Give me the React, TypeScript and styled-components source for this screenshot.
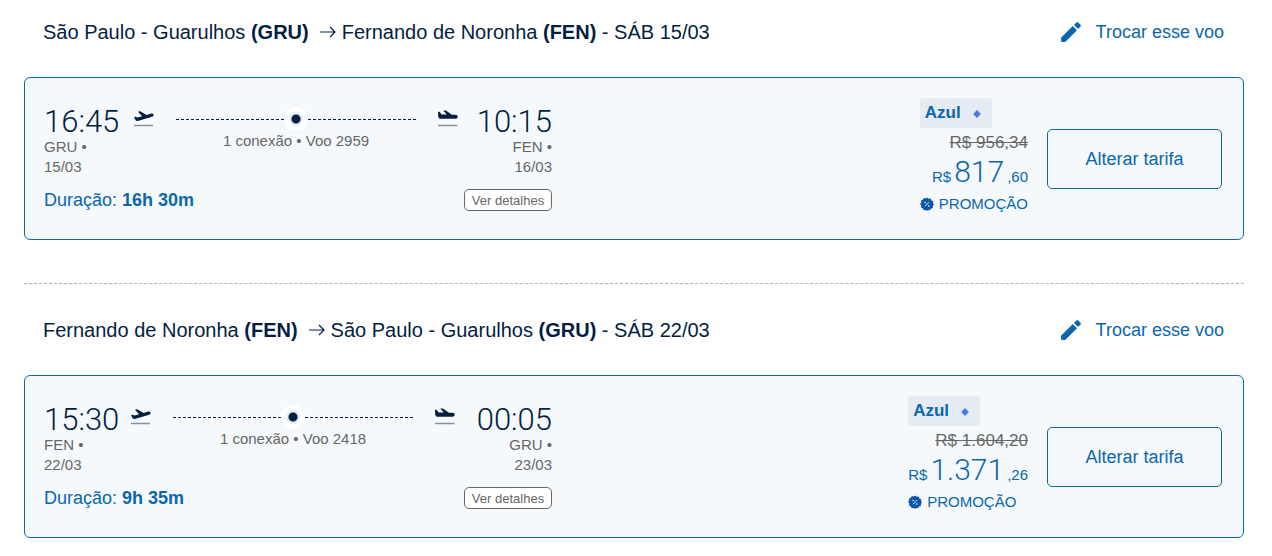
import React from "react";
import styled, { createGlobalStyle } from "styled-components";

const navy = "#041e42";
const blue = "#0a67ad";
const edge = "#12699c";
const grey = "#666666";

const GlobalStyle = createGlobalStyle`
  * { box-sizing: border-box; }
  body { margin: 0; background: #ffffff; color: ${navy}; font-family: "Liberation Sans", Arial, sans-serif; }
  p, h2 { margin: 0; font-weight: 400; }
  button { font-family: inherit; cursor: pointer; }
`;

const Page = styled.main`
  padding: 0 28px 16px 24px;
`;

const Section = styled.section`
  padding: 20px 0 43px;

  & + & {
    border-top: 1px dashed #b4b4b4;
    padding: 34px 0 0;
  }
`;

const Header = styled.header`
  display: flex;
  justify-content: space-between;
  align-items: center;
  padding: 0 20px 0 19px;
  margin-bottom: 33px;
`;

const Route = styled.h2`
  display: flex;
  align-items: center;
  font-size: 20px;
  line-height: 24px;
  white-space: pre;

  svg { margin: 0 6px 0 10px; }
`;

const ChangeLink = styled.a`
  display: flex;
  align-items: center;
  gap: 14px;
  color: ${blue};
  font-size: 18px;
  line-height: 24px;
  text-decoration: none;
`;

const Card = styled.article`
  display: flex;
  justify-content: space-between;
  align-items: flex-start;
  min-height: 163px;
  padding: 20px 21px 16px 19px;
  background: #f5f9fc;
  border: 1px solid ${edge};
  border-radius: 6px;
`;

const Itinerary = styled.div`
  width: 508px;
  padding-top: 9px;
`;

const Leg = styled.div`
  display: flex;
  align-items: flex-start;
`;

const Stop = styled.div<{ $end?: boolean }>`
  width: 76px;
  text-align: ${(p) => (p.$end ? "right" : "left")};
  color: ${grey};
  font-size: 15px;
  line-height: 20px;
`;

const Time = styled.p`
  font-family: Roboto, "Liberation Sans", sans-serif;
  font-weight: 300;
  font-size: 31px;
  line-height: 30px;
  color: ${navy};
`;

const Path = styled.div<{ $gap: number }>`
  flex: 1;
  display: flex;
  justify-content: space-between;
  align-items: flex-start;
  padding: 0 ${(p) => p.$gap}px 0 ${(p) => 32 - p.$gap}px;
`;

const Connection = styled.div`
  width: 240px;
  color: ${grey};
  font-size: 15px;
  line-height: 20px;
  text-align: center;
`;

const Track = styled.div`
  display: flex;
  align-items: center;
  height: 24px;

  &::before,
  &::after {
    content: "";
    flex: 1;
    border-top: 1px dashed ${navy};
  }
`;

const Dot = styled.span`
  width: 24px;
  height: 24px;
  border-radius: 50%;
  background: radial-gradient(circle, ${navy} 4px, #dde3ee 5px, #ffffff 8px);
`;

const LegFooter = styled.div`
  display: flex;
  justify-content: space-between;
  align-items: center;
  margin-top: 12px;
`;

const Duration = styled.p`
  color: ${blue};
  font-size: 18px;
  line-height: 22px;
`;

const DetailsButton = styled.button`
  width: 88px;
  height: 22px;
  padding: 0;
  border: 1px solid ${grey};
  border-radius: 5px;
  background: #ffffff;
  color: ${grey};
  font-size: 13px;
`;

const Purchase = styled.div`
  display: flex;
  align-items: flex-start;
  gap: 19px;
`;

const Fare = styled.div`
  display: flex;
  flex-direction: column;
  align-items: flex-end;
  color: ${blue};
`;

const Badge = styled.span`
  align-self: flex-start;
  display: flex;
  align-items: center;
  gap: 9px;
  width: 72px;
  height: 30px;
  padding-left: 5px;
  border-radius: 3px;
  background: #e4ebf2;
  font-size: 17px;
  font-weight: 700;
`;

const OldPrice = styled.s`
  color: ${grey};
  font-size: 17px;
  line-height: 30px;
`;

const Price = styled.p`
  display: flex;
  align-items: baseline;
  gap: 3px;
  font-size: 15px;
  line-height: 28px;
`;

const Amount = styled.span`
  font-family: Roboto, "Liberation Sans", sans-serif;
  font-weight: 300;
  font-size: 30px;
`;

const Promo = styled.p`
  align-self: flex-start;
  display: flex;
  align-items: center;
  gap: 5px;
  font-size: 15px;
  line-height: 26px;
`;

const FareButton = styled.button`
  width: 175px;
  height: 60px;
  margin-top: 31px;
  border: 1px solid ${edge};
  border-radius: 5px;
  background: transparent;
  color: ${blue};
  font-size: 18px;
`;

const Arrow = () => (
  <svg width="17" height="14" viewBox="0 0 17 14" fill="none" stroke={navy} strokeWidth="1.2" aria-hidden="true">
    <path d="M1 7h15M11 2l5 5-5 5" />
  </svg>
);

const Pencil = () => (
  <svg width="22" height="22" viewBox="0 0 22 22" fill={blue} aria-hidden="true">
    <path d="M1 16.800v2.700Q1 21 2.500 21h2.700L17 9.200 12.800 5zM14 3.900 18.100 8l2.400-2.400q.9-.9 0-1.800l-2.300-2.300q-.9-.9-1.800 0z" />
  </svg>
);

const Takeoff = () => (
  <svg width="20" height="20" viewBox="0 0 20 20" aria-hidden="true">
    <path fill={navy} d="M19.500 7.400c-.3-.9-1.200-1.200-2.200-.9L12.600 7.900 6.200 4.300l-2.300.5 4.200 4.500-4.500 1.300L1.400 9.800l-1.400.5 1.600 2.700c.5.900 1.200 1.100 2.200.9L18.100 9.700c1-.3 1.700-1.200 1.400-2.300z" />
    <path stroke="#8290a5" strokeWidth="1.500" d="M0 18.500h19" />
  </svg>
);

const Landing = () => (
  <svg width="20" height="20" viewBox="0 0 20 20" aria-hidden="true">
    <path fill={navy} d="M0 4.800h1.500L3.600 7.600h5.100L5.200 3.500h2.700l6 4.300h3.700c1.300 0 2.100.8 2.100 2s-.8 2-2.100 2H3C1.200 11.800.3 10.900.2 9z" />
    <path stroke="#8290a5" strokeWidth="1.500" d="M0 18.500h19.500" />
  </svg>
);

const Diamond = () => (
  <svg width="14" height="14" viewBox="0 0 14 14" aria-hidden="true">
    <path fill="#4a7ae0" stroke="#4a7ae0" strokeWidth="1" strokeLinejoin="round" d="m7 4.500 3.300 3.500L7 11.500 3.700 8z" />
  </svg>
);

const Seal = () => (
  <svg width="14" height="14" viewBox="0 0 14 14" aria-hidden="true">
    <path fill="#0a56a8" d="m7 .6 1.600 1.200 2-.3.8 1.900 1.900.8-.3 2L14 7.400l-1.200 1.500.1 2-1.900.7-1 1.700-1.900-.3L7 14l-1.300-1.100-2 .3-.8-1.800-1.900-.8.3-2L0 7l1.200-1.600L1 3.500l1.900-.7L3.800 1l2 .5z" />
    <path stroke="#ffffff" strokeWidth=".9" d="m5 9.200 4-4" />
    <circle cx="5.200" cy="5.500" r=".8" fill="#ffffff" />
    <circle cx="8.800" cy="9" r=".8" fill="#ffffff" />
  </svg>
);

type Place = { city: string; code: string; time: string; date: string };
type Flight = {
  from: Place;
  to: Place;
  day: string;
  number: string;
  duration: string;
  oldPrice: string;
  price: string;
  cents: string;
  gap: number;
};

const flights: Flight[] = [
  {
    from: { city: "São Paulo - Guarulhos", code: "GRU", time: "16:45", date: "15/03" },
    to: { city: "Fernando de Noronha", code: "FEN", time: "10:15", date: "16/03" },
    day: "SÁB 15/03",
    number: "2959",
    duration: "16h 30m",
    oldPrice: "956,34",
    price: "817",
    cents: "60",
    gap: 18,
  },
  {
    from: { city: "Fernando de Noronha", code: "FEN", time: "15:30", date: "22/03" },
    to: { city: "São Paulo - Guarulhos", code: "GRU", time: "00:05", date: "23/03" },
    day: "SÁB 22/03",
    number: "2418",
    duration: "9h 35m",
    oldPrice: "1.604,20",
    price: "1.371",
    cents: "26",
    gap: 21,
  },
];

const FlightSection = ({ flight }: { flight: Flight }) => (
  <Section>
    <Header>
      <Route>
        {flight.from.city} <b>({flight.from.code})</b>
        <Arrow />
        {flight.to.city} <b>({flight.to.code})</b> - {flight.day}
      </Route>
      <ChangeLink href="#trocar">
        <Pencil />
        Trocar esse voo
      </ChangeLink>
    </Header>
    <Card>
      <Itinerary>
        <Leg>
          <Stop>
            <Time>{flight.from.time}</Time>
            <p>{flight.from.code} •</p>
            <p>{flight.from.date}</p>
          </Stop>
          <Path $gap={flight.gap}>
            <Takeoff />
            <Connection>
              <Track>
                <Dot />
              </Track>
              1 conexão • Voo {flight.number}
            </Connection>
            <Landing />
          </Path>
          <Stop $end>
            <Time>{flight.to.time}</Time>
            <p>{flight.to.code} •</p>
            <p>{flight.to.date}</p>
          </Stop>
        </Leg>
        <LegFooter>
          <Duration>
            Duração: <b>{flight.duration}</b>
          </Duration>
          <DetailsButton type="button">Ver detalhes</DetailsButton>
        </LegFooter>
      </Itinerary>
      <Purchase>
        <Fare>
          <Badge>
            Azul
            <Diamond />
          </Badge>
          <OldPrice>R$ {flight.oldPrice}</OldPrice>
          <Price>
            R$<Amount>{flight.price}</Amount>
            <span>,{flight.cents}</span>
          </Price>
          <Promo>
            <Seal />
            PROMOÇÃO
          </Promo>
        </Fare>
        <FareButton type="button">Alterar tarifa</FareButton>
      </Purchase>
    </Card>
  </Section>
);

export default function App() {
  return (
    <>
      <GlobalStyle />
      <Page>
        {flights.map((flight) => (
          <FlightSection key={flight.number} flight={flight} />
        ))}
      </Page>
    </>
  );
}
